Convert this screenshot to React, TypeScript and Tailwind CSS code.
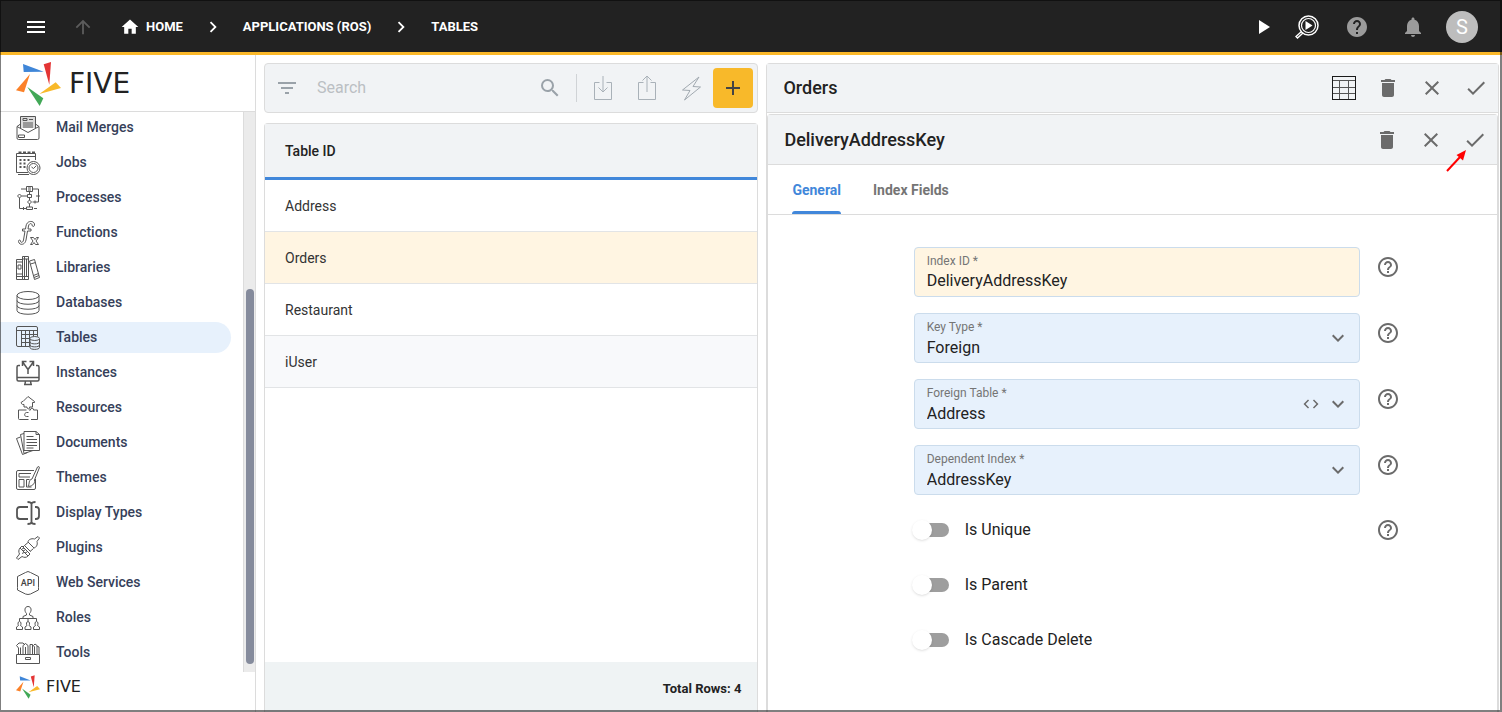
import { useState, type ReactNode } from "react";
import {
  MdAdd,
  MdArrowUpward,
  MdCheck,
  MdChevronRight,
  MdClose,
  MdCode,
  MdDelete,
  MdExpandMore,
  MdFilterList,
  MdHelp,
  MdHelpOutline,
  MdHome,
  MdMenu,
  MdNotifications,
  MdPlayArrow,
  MdSearch,
} from "react-icons/md";

const NAV: { label: string; icon: ReactNode }[] = [
  {
    label: "Mail Merges",
    icon: (
      <>
        <path d="M4.500 8 1 10.500v11.500q0 1.500 1.500 1.500h19q1.500 0 1.500-1.500V10.500L19.500 8M1 10.500l11 6 11-6" />
        <path d="M4.500 12V.5h15V12" fill="#ddd" />
        <path d="M7 2.500h4v2H7zM13 3.500h4M7 7h10M7 9h10M7 11h10M2.500 19h6v2.500h-6z" />
      </>
    ),
  },
  {
    label: "Jobs",
    icon: (
      <>
        <path d="M12 21.500H.5v-19h19V9M.5 5.500h19M2 23.500h11" />
        <path d="M2.500 1.500h3M7 1.500h3M11.500 1.500h3M16 1.500h3" strokeWidth="2" />
        <path d="M3.500 9h2M7.500 9h2M11.500 9h2M3.500 12.500h2M7.500 12.500h2M3.500 16h2M7.500 16h2" strokeWidth="2" />
        <circle cx="17.500" cy="17" r="6.500" fill="white" />
        <circle cx="17.500" cy="17" r="4.500" />
        <path d="m15.500 16 2 1.500 2.500-2.500" />
      </>
    ),
  },
  {
    label: "Processes",
    icon: (
      <>
        <path d="M10.500.5h6v5h-6zM12 2h3M12 4h3M11.500 8.500h4v3h-4zM10.500 21h6v2.500h-6z" />
        <path d="M13.500 5.500v3M13.500 11.500V14M13.500 18v3M5 3h5.500M16.500 3h6v13h-6M5.500 10h6M3.500 12v10.500h7M18 22.500h3" />
        <path d="m3.500 8 2 2-2 2-2-2zM13.500 14l2 2-2 2-2-2z" />
        <path d="M20 10h4M19 14.500v3M7.500 21v3" />
      </>
    ),
  },
  {
    label: "Functions",
    icon: (
      <>
        <path d="M18.500 4.500c1-5-7.500-6-8.500.5L9.500 8H6.500v2H9l-1.500 9c-.5 3-3 3-3 1 0-1.500-2.500-1-2 .5.500 4 6.500 4 7.500-1.500l1.500-9H15V8h-3l.5-3c.5-3 3.500-3 3.500-1 0 1.500 2 2 2.500.5z" />
        <path d="M14.500 16.500h3l1.500 2 1.500-2h2l-2.500 3.500 2.500 3.500h-3l-1.500-2-1.500 2h-2l2.500-3.500z" />
      </>
    ),
  },
  {
    label: "Libraries",
    icon: (
      <>
        <path d="M.5 3.500h6v20h-6zM.5 6h6M.5 18h6M.5 20.500h6M2 9h3v4H2z" />
        <path d="M6.500.5h6v23h-6zM8.500.5v23M10.500 3v18M6.500 3h6M6.500 20.500h6" />
        <path d="m13.500 5 5-1.500 5 18-5 2zM14.500 8l5-1.500M17.500 19.500l5-2M18 21.500l5-2" />
      </>
    ),
  },
  {
    label: "Databases",
    icon: (
      <>
        <ellipse cx="12" cy="4.500" rx="11" ry="4" />
        <path d="M1 4.500v15c0 5 22 5 22 0v-15M1 9.500c0 5 22 5 22 0M1 14.500c0 5 22 5 22 0" />
      </>
    ),
  },
  {
    label: "Tables",
    icon: (
      <>
        <path d="M13.500 20.500H2q-1.500 0-1.500-1.500V2Q.5.5 2 .5h18q1.500 0 1.500 1.500v8.500M.5 4.500h21M5.500 4.500v16M9.500 4.500v16M13.500 4.500v16M17.500 4.500v6M5.500 8.500h16M5.500 12.500h8M5.500 16.500h8" />
        <path d="M14 13v8.500c0 2.500 9.500 2.500 9.500 0V13" fill="#e7f1fc" />
        <ellipse cx="18.750" cy="12.500" rx="4.750" ry="2" />
        <path d="M14 16c0 2.500 9.500 2.500 9.500 0M14 19c0 2.500 9.500 2.500 9.500 0" />
      </>
    ),
  },
  {
    label: "Instances",
    icon: (
      <path
        d="M4 4.500H2.500Q1 4.500 1 6v12.500q0 1.500 1.500 1.500h19q1.500 0 1.500-1.500V6q0-1.500-1.500-1.500H20M1 16.500h22M9.500 20l-.5 3M14.500 20l.5 3M8 23.500h8M12 13V8.500L7 1.500M12 8.500l5-7M6.500 5V.5h4M17.500 5V.5h-4"
        strokeWidth="1.500"
      />
    ),
  },
  {
    label: "Resources",
    icon: (
      <>
        <path d="m12 .5 6.500 5v1h-2v4.500h-3c1 2.500-3 2.500-2.500 0H8V8.500C4.500 9 4.500 5 7 5.500z" />
        <path d="M2.500 14h8M13 14h1.500c-.5-2.500 3.500-2.500 3 0h4v9.500H15M12.500 23.500h-9q-1 0-1-1V14M12.500 16.500h-2c-2.500.5-2.500 4 0 4h2" />
      </>
    ),
  },
  {
    label: "Documents",
    icon: (
      <>
        <path d="M8 .5h12l3.500 3v16H8zM20 .5v3h3.500M10.500 5.500h7M10.500 8.500h10.500M10.500 11.500h10.500M10.500 14.500h10.500M10.500 17h7" />
        <path d="M8 2.500 4.500 3.500l3.500 19 9-3M4.500 6 .5 7.500l6 16 5-2" />
      </>
    ),
  },
  {
    label: "Themes",
    icon: (
      <>
        <path d="M18 4.500H2Q.5 4.500.5 6v16q0 1.500 1.500 1.500h16q1.500 0 1.500-1.500v-9M3 7.500h12M3 7.500v3.500h11M3 13.500h5V21H3zM10.500 21v-7.500h3M10.500 21h5" />
        <path d="m16 13 5.500-12q2-1 2 .5L18.500 14c1 4-3.500 7-6.500 6 2-2 0-6 4-7z" />
      </>
    ),
  },
  {
    label: "Display Types",
    icon: (
      <path
        d="M12 6H4Q1 6 1 9v6q0 3 3 3h8M19 6h1q3 0 3 3v6q0 3-3 3h-1M15.500 3v18M15.500 3q0-2-4-2M15.500 3q0-2 4-2M15.500 21q0 2-4 2M15.500 21q0 2 4 2"
        strokeWidth="1.800"
      />
    ),
  },
  {
    label: "Plugins",
    icon: (
      <>
        <path d="m12 6 6 6c2-.5 4-3 3-6.500L23.500 2 22 .5 18.500 3C15 2 12 4 12 6z" />
        <path d="m4 12 8 8c-2 2-4 1.500-6 .5L2 23.500.5 22l3-4c-1-2-1-4 .5-6zM6 10l8 8M4 12l2-2M12 20l2-2" />
        <path d="m8.500 9.500 3.500-3M14 15.500l3.500-3M6 13l2-1M7 15l2-1M9 17l2-1M8.500 9.500 7 11M6 17.500l2-1" />
        <path d="m8.500 9.500 6 6" />
      </>
    ),
  },
  {
    label: "Web Services",
    icon: (
      <>
        <path d="M1.500 8V5.500l8-4M14.500 1.500l8 4V8M22.500 16.500V19l-8 4M9.500 23l-8-4v-2.500M9.500 1.500 12 .5l2.500 1M9.500 23l2.500.5 2.500-.5M1.500 8v8.500M22.500 8v8.500" />
        <text
          x="12"
          y="15"
          textAnchor="middle"
          fontSize="9"
          fontWeight="500"
          stroke="none"
          fill="#444"
        >
          API
        </text>
      </>
    ),
  },
  {
    label: "Roles",
    icon: (
      <>
        <path d="M10.500 7.500C8 5 8.500.5 12 .5s4 4.500 1.500 7v1.500l3.500 1.500v2H7v-2L10.500 9zM12 12.500V15M3.500 15v-2.500h17V15" />
        <path d="M2.500 19.500c-1-1.500-.5-4 1-4s2 2.500 1 4l2 1.500v2.500h-6V21zM11 19.500c-1-1.500-.5-4 1-4s2 2.500 1 4l2 1.500v2.500H9V21zM19.500 19.500c-1-1.500-.5-4 1-4s2 2.500 1 4l2 1.500v2.500h-6V21z" />
      </>
    ),
  },
  {
    label: "Tools",
    icon: (
      <>
        <path d="M.5 13.500h23v9H.5zM9.500 16.500h5v2h-5z" />
        <path d="M2.500 13V7L.5 4.500 3 2h4l2 2M4.500 13V6.500M7 13V4.500L9.500 2.500 12 4.500V13M9.500 13V6M14 13V3.500h2.500V13M18.500 13V6l-1-1.500L19 3l2 1.500V13M23 13V6l-2-1" />
      </>
    ),
  },
];

const ROWS = ["Address", "Orders", "Restaurant", "iUser"];

function Logo({ small }: { small?: boolean }) {
  return (
    <span className={small ? "flex items-center gap-1.5" : "flex items-center gap-2"}>
      <svg viewBox="16 62 45 44" className={small ? "size-6" : "h-11 w-[45px]"} aria-hidden="true">
        <path d="M23 64 43.700 71.700 23.700 72z" fill="#3f86d8" />
        <path d="M43.700 64.300 51 62l-1.700 22.700z" fill="#e43535" />
        <path d="M39.300 94 55.700 82.300 61 88z" fill="#f8b92a" />
        <path d="m27.300 87 16 11.300L39.700 106z" fill="#42a857" />
        <path d="m30 74-6 18.300-8-2z" fill="#fb8128" />
      </svg>
      <span
        className={
          small
            ? "font-['DejaVu_Sans'] text-base leading-6 text-[#222]"
            : "font-['DejaVu_Sans'] text-[28px] leading-8 text-[#222]"
        }
      >
        FIVE
      </span>
    </span>
  );
}

function IconButton({ label, children }: { label: string; children: ReactNode }) {
  return (
    <button type="button" aria-label={label} className="flex h-10 w-11 items-center justify-center">
      {children}
    </button>
  );
}

function HelpButton({ label }: { label: string }) {
  return (
    <button type="button" aria-label={`Help: ${label}`} className="text-[#6b6b6b]">
      <MdHelpOutline size={24} />
    </button>
  );
}

function Field({
  id,
  label,
  value,
  select,
  code,
}: {
  id: string;
  label: string;
  value: string;
  select?: boolean;
  code?: boolean;
}) {
  return (
    <div className="flex items-start gap-4">
      <div
        className={`relative h-[50px] flex-1 rounded border border-[#cbdcec] ${
          select ? "bg-[#e7f1fc]" : "bg-[#fff5e2]"
        }`}
      >
        <label htmlFor={id} className="absolute left-3 top-[5px] text-xs leading-4 text-[#757575]">
          {label} *
        </label>
        {select ? (
          <select
            id={id}
            defaultValue={value}
            className="h-full w-full appearance-none px-3 pt-5 text-base text-[#222] outline-none"
          >
            <option>{value}</option>
          </select>
        ) : (
          <input
            id={id}
            defaultValue={value}
            className="h-full w-full px-3 pt-4 text-base text-[#222] outline-none"
          />
        )}
        {select && (
          <span className="pointer-events-none absolute inset-y-0 right-[9px] flex items-center gap-1.5 text-[#6b6b6b]">
            {code && <MdCode size={18} />}
            <MdExpandMore size={24} />
          </span>
        )}
      </div>
      <div className="pt-2">
        <HelpButton label={label} />
      </div>
    </div>
  );
}

function Toggle({ label, help }: { label: string; help?: boolean }) {
  return (
    <div className="flex h-[38px] items-center justify-between">
      <label className="flex items-center gap-4 text-base text-[#222]">
        <input
          type="checkbox"
          role="switch"
          className="relative ml-px h-3.5 w-[34px] appearance-none rounded-full bg-[#9e9e9e] before:absolute before:-left-[3px] before:-top-[3px] before:size-5 before:rounded-full before:bg-white before:shadow checked:before:left-[17px]"
        />
        {label}
      </label>
      {help && <HelpButton label={label} />}
    </div>
  );
}

export default function App() {
  const [active, setActive] = useState("Tables");
  const [selected, setSelected] = useState("Orders");

  return (
    <div className="relative flex h-screen flex-col bg-white font-['Roboto',sans-serif]">
      <header className="flex h-[55px] shrink-0 items-center justify-between border-b-3 border-[#fbb829] bg-[#222] pr-6 pt-0.5 text-white">
        <nav className="flex items-center text-[13px] font-bold">
          <button type="button" aria-label="Menu" className="ml-6">
            <MdMenu size={24} />
          </button>
          <button type="button" aria-label="Up" className="ml-6 text-[#5c5c5c]">
            <MdArrowUpward size={22} />
          </button>
          <a href="#home" className="ml-[26px] flex items-center gap-1.5">
            <MdHome size={20} />
            HOME
          </a>
          <MdChevronRight size={22} className="mx-[19px]" />
          <a href="#applications">APPLICATIONS (ROS)</a>
          <MdChevronRight size={22} className="mx-[19px]" />
          <a href="#tables">TABLES</a>
        </nav>
        <div className="flex items-center">
          <button type="button" aria-label="Run">
            <MdPlayArrow size={24} />
          </button>
          <button type="button" aria-label="Inspect" className="ml-5">
            <svg viewBox="0 0 24 24" className="size-6" fill="none" stroke="white" aria-hidden="true">
              <circle cx="13.500" cy="10.500" r="9.500" strokeWidth="1.500" />
              <circle cx="13.500" cy="10.500" r="7" strokeWidth="1.200" />
              <path d="m6.500 16.500-5.500 5 1.500 1.500 5.500-5" strokeWidth="1.400" />
              <path d="M10.500 6v9l7-4.500z" fill="white" stroke="none" />
            </svg>
          </button>
          <button type="button" aria-label="Help" className="ml-[26px] text-[#9b9b9b]">
            <MdHelp size={24} />
          </button>
          <button type="button" aria-label="Notifications" className="ml-8 text-[#9b9b9b]">
            <MdNotifications size={24} />
          </button>
          <button
            type="button"
            aria-label="Account"
            className="ml-[21px] flex size-8 items-center justify-center rounded-full bg-[#bdbdbd] text-xl"
          >
            S
          </button>
        </div>
      </header>

      <div className="flex min-h-0 flex-1">
        <aside className="flex w-64 shrink-0 flex-col border-r border-[#dcdcdc]">
          <div className="flex h-[57px] shrink-0 items-center border-b border-[#dcdcdc] px-4 pt-0.5">
            <Logo />
          </div>
          <div className="flex min-h-0 flex-1">
            <ul className="min-w-0 flex-1 overflow-hidden">
              {NAV.map(({ label, icon }) => (
                <li key={label} className="mb-1 mr-3">
                  <button
                    type="button"
                    onClick={() => setActive(label)}
                    className={`flex h-[31px] w-full items-center gap-4 rounded-r-full pl-4 text-sm font-medium text-[#363f5a] ${
                      active === label ? "bg-[#e7f1fc]" : ""
                    }`}
                  >
                    <svg
                      viewBox="0 0 24 24"
                      className="size-6 overflow-visible"
                      fill="none"
                      stroke="#555"
                      aria-hidden="true"
                    >
                      {icon}
                    </svg>
                    <span className="pb-0.5">{label}</span>
                  </button>
                </li>
              ))}
            </ul>
            <div className="flex w-3 flex-col items-center justify-end border-l border-[#dcdcdc] bg-[#ebebeb] pb-2">
              <div className="h-[68%] w-2 rounded-full bg-[#858b9c]" />
            </div>
          </div>
          <div className="flex h-10 shrink-0 items-start px-4 pt-[3px]">
            <Logo small />
          </div>
        </aside>

        <main className="grid min-w-0 flex-1 grid-cols-[494fr_732fr] gap-2 pl-2 pr-[3px] pt-2">
          <section className="flex min-h-0 flex-col gap-2.5">
            <div className="flex h-[50px] shrink-0 items-center rounded border border-[#dcdcdc] bg-[#f1f3f5] pr-1 text-[#9aa2a9]">
              <IconButton label="Filter">
                <MdFilterList size={24} />
              </IconButton>
              <input
                type="search"
                aria-label="Search"
                placeholder="Search"
                className="ml-2 min-w-0 flex-1 text-base outline-none placeholder:text-[#bbbfc3]"
              />
              <IconButton label="Search">
                <MdSearch size={24} />
              </IconButton>
              <span className="mx-1 h-7 w-px bg-[#d0d3d6]" />
              <IconButton label="Import">
                <svg viewBox="0 0 20 26" className="h-[26px] w-5" fill="none" stroke="#a9b1b8" aria-hidden="true">
                  <path d="M6.500 7.500h-5v17h17v-17h-5M10 1v16M5.500 12.500 10 17l4.500-4.500" />
                </svg>
              </IconButton>
              <IconButton label="Export">
                <svg viewBox="0 0 20 26" className="h-[26px] w-5" fill="none" stroke="#a9b1b8" aria-hidden="true">
                  <path d="M6.500 7.500h-5v17h17v-17h-5M10 17V1M5.500 5.500 10 1l4.500 4.500" />
                </svg>
              </IconButton>
              <IconButton label="Actions">
                <svg viewBox="0 0 20 26" className="h-[26px] w-5" fill="none" stroke="#a1a9b0" aria-hidden="true">
                  <path d="M18 2 1.500 15l7.500.5L3.500 25l16-13-7.500-.5z" />
                </svg>
              </IconButton>
              <button
                type="button"
                aria-label="Add"
                className="flex size-10 items-center justify-center rounded bg-[#f8b92a] text-[#444]"
              >
                <MdAdd size={24} />
              </button>
            </div>

            <div className="flex min-h-0 flex-1 flex-col rounded-t border border-b-0 border-[#dcdcdc] text-sm text-[#333]">
              <table className="w-full border-separate border-spacing-0">
                <thead>
                  <tr>
                    <th className="h-14 border-b-3 border-[#4187da] bg-[#f1f3f5] px-5 text-left font-medium text-[#222]">
                      Table ID
                    </th>
                  </tr>
                </thead>
                <tbody>
                  {ROWS.map((row) => (
                    <tr
                      key={row}
                      onClick={() => setSelected(row)}
                      className={selected === row ? "bg-[#fff5e2]" : "even:bg-[#f8f9fb] odd:bg-white"}
                    >
                      <td className="h-[52px] border-b border-[#e2e4e6] px-5">{row}</td>
                    </tr>
                  ))}
                </tbody>
              </table>
              <div className="mt-auto flex h-[50px] items-center justify-end bg-[#eff3f4] px-4 pt-1 text-[13px] font-bold text-[#222]">
                Total Rows: 4
              </div>
            </div>
          </section>

          <section className="flex min-h-0 flex-col rounded-t border border-b-0 border-[#dcdcdc]">
            <div className="flex h-[49px] shrink-0 items-center justify-between border-b border-[#dcdcdc] bg-[#f1f3f5] pl-4">
              <h1 className="text-lg font-medium text-[#222]">Orders</h1>
              <div className="flex text-[#6b6b6b]">
                <IconButton label="Table view">
                  <svg
                    viewBox="0 0 24 24"
                    className="size-6"
                    fill="none"
                    shapeRendering="crispEdges"
                    aria-hidden="true"
                  >
                    <path d="M0 4.500h24M0 11h24M0 17.500h24M7.500 4v20M16.500 4v20" stroke="#555" />
                    <path d="M.5.5h23v23H.5z" stroke="#1a1a1a" />
                  </svg>
                </IconButton>
                <IconButton label="Delete Orders">
                  <MdDelete size={24} />
                </IconButton>
                <IconButton label="Close Orders">
                  <MdClose size={24} />
                </IconButton>
                <IconButton label="Save Orders">
                  <MdCheck size={24} />
                </IconButton>
              </div>
            </div>

            <div className="mt-px flex min-h-0 flex-1 flex-col rounded-t border border-b-0 border-[#dcdcdc]">
              <div className="relative flex h-[50px] shrink-0 items-center justify-between border-b border-[#dcdcdc] bg-[#f1f3f5] pl-4">
                <h2 className="text-lg font-medium text-[#222]">DeliveryAddressKey</h2>
                <div className="flex text-[#6b6b6b]">
                  <IconButton label="Delete key">
                    <MdDelete size={24} />
                  </IconButton>
                  <IconButton label="Close key">
                    <MdClose size={24} />
                  </IconButton>
                  <IconButton label="Save key">
                    <MdCheck size={24} />
                  </IconButton>
                </div>
                {/* callout arrow pointing at the save tick */}
                <svg
                  viewBox="0 0 22 24"
                  className="pointer-events-none absolute -bottom-2 right-[30px] h-6 w-[22px]"
                  aria-hidden="true"
                >
                  <path d="M2 23 15 9" stroke="red" strokeWidth="2" />
                  <path d="M21 2 11.500 7l6.500 5.500z" fill="red" />
                </svg>
              </div>

              <div role="tablist" className="flex h-[50px] shrink-0 gap-8 border-b border-[#dcdcdc] px-6 text-sm font-bold">
                <button type="button" role="tab" aria-selected="true" className="relative text-[#4187da]">
                  General
                  <span className="absolute inset-x-0 bottom-0 h-[3px] rounded-t bg-[#4187da]" />
                </button>
                <button type="button" role="tab" aria-selected="false" className="text-[#757575]">
                  Index Fields
                </button>
              </div>

              <form className="mx-auto flex w-full max-w-[534px] flex-col gap-4 pl-12 pt-8">
                <Field id="index-id" label="Index ID" value="DeliveryAddressKey" />
                <Field id="key-type" label="Key Type" value="Foreign" select />
                <Field id="foreign-table" label="Foreign Table" value="Address" select code />
                <Field id="dependent-index" label="Dependent Index" value="AddressKey" select />
                <div className="flex flex-col gap-[17px]">
                  <Toggle label="Is Unique" help />
                  <Toggle label="Is Parent" />
                  <Toggle label="Is Cascade Delete" />
                </div>
              </form>
            </div>
          </section>
        </main>
      </div>

      {/* window frame */}
      <div className="pointer-events-none absolute inset-0 border-b-2 border-l border-r-2 border-t border-black/50" />
    </div>
  );
}
